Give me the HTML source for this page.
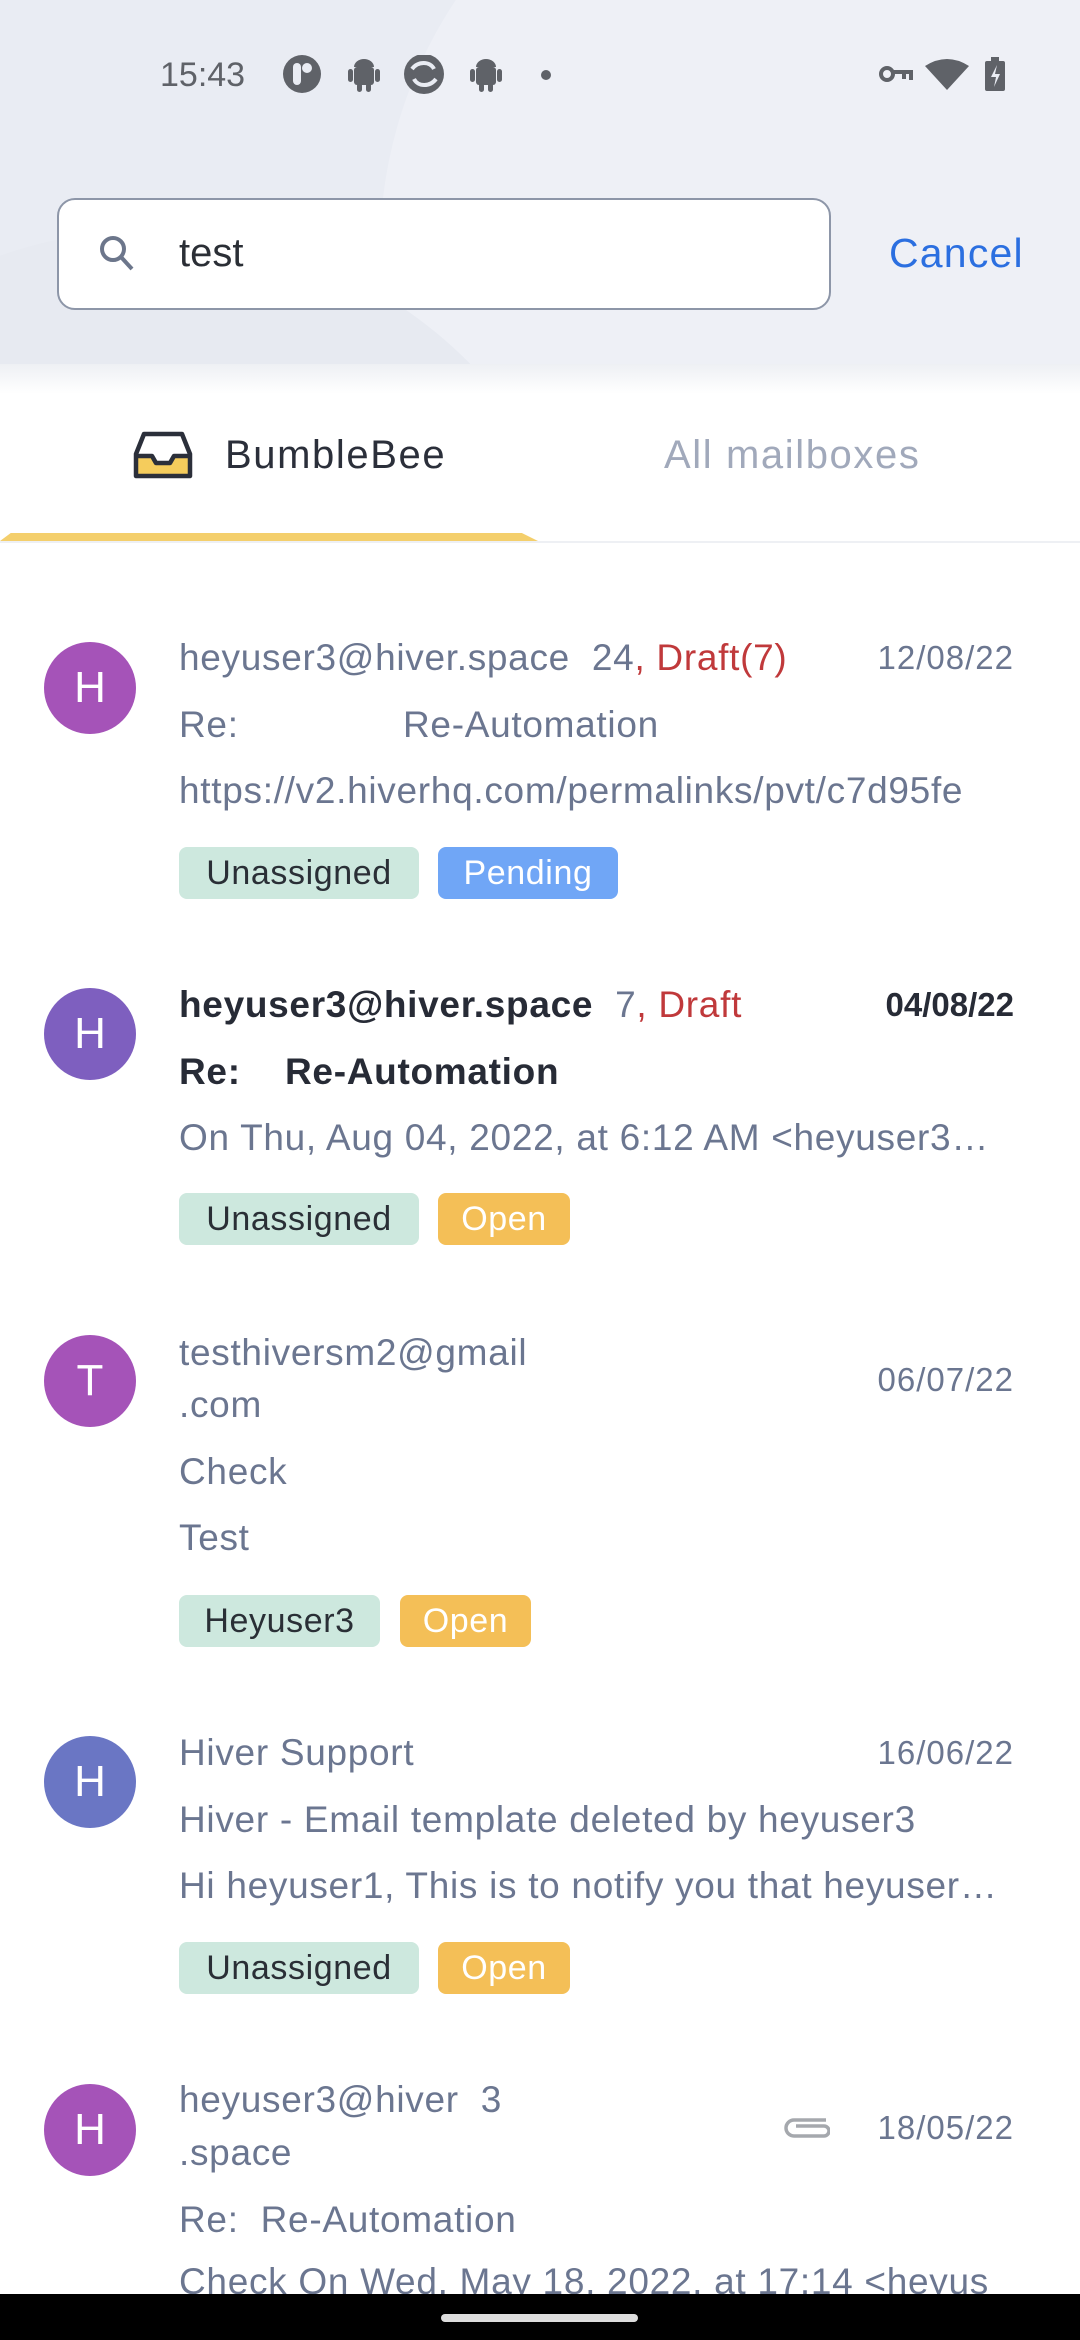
<!DOCTYPE html>
<html><head><meta charset="utf-8"><style>
*{margin:0;padding:0;box-sizing:border-box}
body{width:1080px;height:2340px;position:relative;overflow:hidden;background:#fff;font-family:"Liberation Sans",sans-serif;color:#6b7690}
.a{position:absolute;white-space:nowrap}
.t{position:absolute;white-space:nowrap;line-height:50px;font-size:37px;letter-spacing:0.7px;color:#6b7690}
.av{position:absolute;left:44px;width:92px;height:92px;border-radius:50%;color:#fff;font-size:44px;text-align:center;line-height:92px}
.d{position:absolute;right:66px;white-space:nowrap;line-height:50px;font-size:33px;letter-spacing:1px;color:#6b7690}
.tag{position:absolute;height:52px;border-radius:8px;font-size:34px;letter-spacing:0.6px;line-height:52px;text-align:center}
.g{background:#cde8de;color:#2a2f36}
.p{background:#70a6f6;color:#fff}
.o{background:#f4bf57;color:#fff}
.r{color:#c0393b}
.b{font-weight:bold;color:#272b36}
.el{overflow:hidden;text-overflow:ellipsis;width:835px}
</style></head><body>
<div class="a" style="left:0;top:0;width:1080px;height:364px;background:#e9ecf3;overflow:hidden">
 <div class="a" style="left:380px;top:-200px;width:900px;height:900px;border-radius:50%;background:#eef0f6"></div>
 <div class="a" style="left:-300px;top:230px;width:900px;height:900px;border-radius:50%;background:#e7eaf1"></div>
</div>
<div class="a" style="left:0;top:364px;width:1080px;height:30px;background:linear-gradient(#eef0f4,#fff)"></div>
<div class="a" style="left:160px;top:55px;font-size:34px;line-height:40px;color:#5f6268">15:43</div>
<svg class="a" style="left:280px;top:55px" width="240" height="40" viewBox="0 0 240 40">
 <circle cx="22" cy="19" r="19" fill="#5f6268"/><rect x="13" y="8" width="8" height="22" rx="4" fill="#e9ecf3"/><circle cx="27" cy="13" r="5" fill="#e9ecf3"/>
 <rect x="74" y="12" width="20" height="18" rx="3" fill="#5f6268"/><path d="M74 12a10 8 0 0 1 20 0z" fill="#5f6268"/><rect x="68" y="14" width="5" height="13" rx="2.5" fill="#5f6268"/><rect x="95" y="14" width="5" height="13" rx="2.5" fill="#5f6268"/><rect x="77" y="28" width="5" height="9" rx="2.5" fill="#5f6268"/><rect x="86" y="28" width="5" height="9" rx="2.5" fill="#5f6268"/>
 <circle cx="144" cy="19" r="20" fill="#5f6268"/><path d="M132 14c6-8 18-8 22 0M156 24c-6 8-18 8-22 0" stroke="#e9ecf3" stroke-width="4" fill="none"/>
 <rect x="196" y="12" width="20" height="18" rx="3" fill="#5f6268"/><path d="M196 12a10 8 0 0 1 20 0z" fill="#5f6268"/><rect x="190" y="14" width="5" height="13" rx="2.5" fill="#5f6268"/><rect x="217" y="14" width="5" height="13" rx="2.5" fill="#5f6268"/><rect x="199" y="28" width="5" height="9" rx="2.5" fill="#5f6268"/><rect x="208" y="28" width="5" height="9" rx="2.5" fill="#5f6268"/>
</svg>
<div class="a" style="left:541px;top:70px;width:10px;height:10px;border-radius:50%;background:#5f6268"></div>
<svg class="a" style="left:878px;top:56px" width="135" height="36" viewBox="0 0 135 36">
 <circle cx="9" cy="18" r="6" stroke="#5f6268" stroke-width="4" fill="none"/><path d="M15 16h18v8M26 18v5" stroke="#5f6268" stroke-width="4" fill="none"/>
 <path d="M47 10q22-14 44 0l-22 24z" fill="#5f6268"/>
 <rect x="107" y="5" width="20" height="30" rx="2" fill="#5f6268"/><rect x="113" y="1" width="8" height="5" fill="#5f6268"/><path d="M119 9l-6 12h5l-2 10 6-13h-5z" fill="#e9ecf3"/>
</svg>
<div class="a" style="left:57px;top:198px;width:774px;height:112px;border:2px solid #8d96a8;border-radius:18px;background:#fff"></div>
<svg class="a" style="left:96px;top:232px" width="44" height="44" viewBox="0 0 44 44"><circle cx="17" cy="17" r="11" stroke="#6c768b" stroke-width="4" fill="none"/><path d="M25 25l11 12" stroke="#6c768b" stroke-width="4"/></svg>
<div class="a" style="left:179px;top:228px;font-size:40px;line-height:50px;color:#2b2f36">test</div>
<div class="a" style="left:889px;top:228px;font-size:41px;letter-spacing:1.2px;line-height:50px;color:#2b6fe0">Cancel</div>
<svg class="a" style="left:132px;top:430px" width="62" height="50" viewBox="0 0 62 50"><path d="M4 26h16l4 7h14l4-7h16v18H4z" fill="#f5cc5c"/><path d="M4 46V24l8-20h38l8 20v22z M4 26h16l4 7h14l4-7h16" stroke="#2b2f3a" stroke-width="4.5" fill="none" stroke-linejoin="round"/></svg>
<div class="a" style="left:225px;top:430px;font-size:40px;letter-spacing:1.6px;line-height:50px;color:#2b2f3a">BumbleBee</div>
<div class="a" style="left:664px;top:430px;font-size:40px;letter-spacing:1.6px;line-height:50px;color:#a1a9bb">All mailboxes</div>
<div class="a" style="left:0;top:533px;width:538px;height:8px;background:#f4cf6c;clip-path:polygon(0 100%,2% 0,97% 0,100% 100%)"></div>
<div class="a" style="left:0;top:541px;width:1080px;height:2px;background:#eef0f4"></div>

<div class="av" style="top:642px;background:#a553b8">H</div>
<div class="t" style="left:179px;top:633px">heyuser3@hiver.space&nbsp; 24<span class="r">, Draft(7)</span></div>
<div class="d" style="top:633px">12/08/22</div>
<div class="t" style="left:179px;top:700px">Re:</div><div class="t" style="left:403px;top:700px">Re-Automation</div>
<div class="t" style="left:179px;top:766px">https://v2.hiverhq.com/permalinks/pvt/c7d95fe</div>
<div class="tag g" style="left:179px;top:847px;width:240px">Unassigned</div>
<div class="tag p" style="left:438px;top:847px;width:180px">Pending</div>

<div class="av" style="top:988px;background:#7e5fbf">H</div>
<div class="t b" style="left:179px;top:980px">heyuser3@hiver.space&nbsp; <span style="font-weight:normal;color:#6b7690">7</span><span class="r" style="font-weight:normal">, Draft</span></div>
<div class="d b" style="top:980px;letter-spacing:0">04/08/22</div>
<div class="t b" style="left:179px;top:1047px">Re:</div><div class="t b" style="left:285px;top:1047px">Re-Automation</div>
<div class="t el" style="left:179px;top:1113px">On Thu, Aug 04, 2022, at 6:12 AM &lt;heyuser3@hiver.space&gt;</div>
<div class="tag g" style="left:179px;top:1193px;width:240px">Unassigned</div>
<div class="tag o" style="left:438px;top:1193px;width:132px">Open</div>

<div class="av" style="top:1335px;background:#a553b8">T</div>
<div class="t" style="left:179px;top:1328px">testhiversm2@gmail</div>
<div class="t" style="left:179px;top:1380px">.com</div>
<div class="d" style="top:1355px">06/07/22</div>
<div class="t" style="left:179px;top:1447px">Check</div>
<div class="t" style="left:179px;top:1513px">Test</div>
<div class="tag g" style="left:179px;top:1595px;width:201px">Heyuser3</div>
<div class="tag o" style="left:400px;top:1595px;width:131px">Open</div>

<div class="av" style="top:1736px;background:#6a76c4">H</div>
<div class="t" style="left:179px;top:1728px">Hiver Support</div>
<div class="d" style="top:1728px">16/06/22</div>
<div class="t" style="left:179px;top:1795px">Hiver - Email template deleted by heyuser3</div>
<div class="t el" style="left:179px;top:1861px">Hi heyuser1, This is to notify you that heyuser3 has deleted</div>
<div class="tag g" style="left:179px;top:1942px;width:240px">Unassigned</div>
<div class="tag o" style="left:438px;top:1942px;width:132px">Open</div>

<div class="av" style="top:2084px;background:#a553b8">H</div>
<div class="t" style="left:179px;top:2075px">heyuser3@hiver&nbsp; 3</div>
<div class="t" style="left:179px;top:2128px">.space</div>
<svg class="a" style="left:782px;top:2112px" width="48" height="28" viewBox="0 0 48 28"><path d="M44 8H12a8 8 0 0 0 0 16h30a5 5 0 0 0 0-10H14" stroke="#a5a8ad" stroke-width="3.5" fill="none"/></svg>
<div class="d" style="top:2103px">18/05/22</div>
<div class="t" style="left:179px;top:2195px">Re:&nbsp; Re-Automation</div>
<div class="t" style="left:179px;top:2257px">Check On Wed, May 18, 2022, at 17:14 &lt;heyus</div>

<div class="a" style="left:0;top:2294px;width:1080px;height:46px;background:#000"></div>
<div class="a" style="left:441px;top:2314px;width:197px;height:8px;border-radius:4px;background:#ddd"></div>
</body></html>
